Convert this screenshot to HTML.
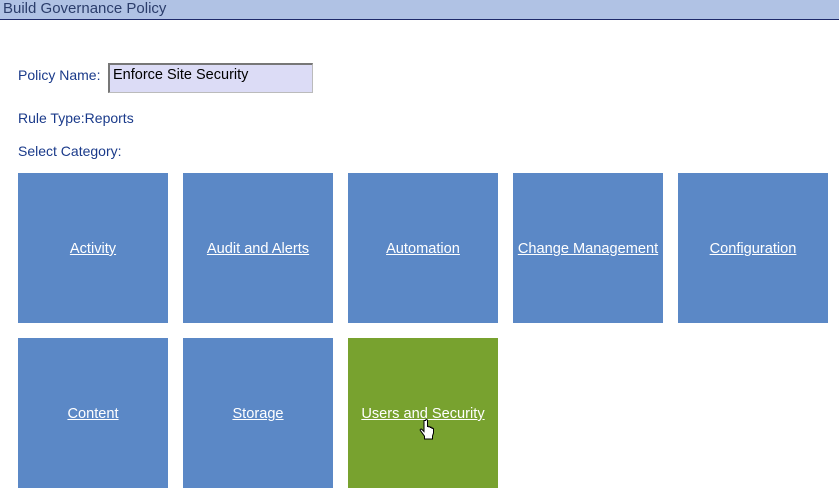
<!DOCTYPE html>
<html><head><style>
body{margin:0;width:839px;height:501px;background:#fff;font-family:"Liberation Sans",sans-serif;font-size:14px;color:#1a3a8a;position:relative;overflow:hidden}
.hdr{position:absolute;left:0;top:0;width:839px;height:19px;background:#b0c2e4;border-bottom:1px solid #1e2a6a;color:#2b3d6b;font-size:15px;line-height:18px;padding-left:3px;box-sizing:content-box}
.t{position:absolute;font-size:14px}
.inp{position:absolute;left:108px;top:63px;width:205px;height:30px;background:#dcdcf6;border:1px solid #bbb;border-top:2px solid #777;border-left:2px solid #777;box-sizing:border-box;color:#000;font-size:14.5px;padding:2px 0 0 3px}
.tile{position:absolute;width:150px;height:150px;background:#5b88c6;color:#fff;text-decoration:underline;display:flex;align-items:center;justify-content:center;font-size:14.6px;padding-top:2px;box-sizing:border-box}
</style></head><body>
<div class="hdr">Build Governance Policy</div>
<div class="t" style="left:18px;top:67px">Policy Name:</div>
<div class="inp">Enforce Site Security</div>
<div class="t" style="left:18px;top:110px">Rule Type:Reports</div>
<div class="t" style="left:18px;top:143px">Select Category:</div>
<div class="tile" style="left:18px;top:173px">Activity</div>
<div class="tile" style="left:183px;top:173px">Audit and Alerts</div>
<div class="tile" style="left:348px;top:173px">Automation</div>
<div class="tile" style="left:513px;top:173px">Change Management</div>
<div class="tile" style="left:678px;top:173px">Configuration</div>
<div class="tile" style="left:18px;top:338px">Content</div>
<div class="tile" style="left:183px;top:338px">Storage</div>
<div class="tile" style="left:348px;top:338px;background:#78a22f">Users and Security</div>
<svg style="position:absolute;left:419px;top:419px" width="18" height="22" viewBox="0 0 18 22"><path d="M5 1.5v11l-2-2c-1-1-2.5 0-1.5 1.2l4 5.5V20h8v-3l1-3v-4c0-1-1.5-1-1.5 0V9c0-1-1.5-1-1.5 0V8.5c0-1-1.5-1-1.5 0V8c0-1-1.5-1-1.5 0V1.5c0-1.2-2-1.2-2 0z" fill="#fff" stroke="#000" stroke-width="1"/></svg>
</body></html>
